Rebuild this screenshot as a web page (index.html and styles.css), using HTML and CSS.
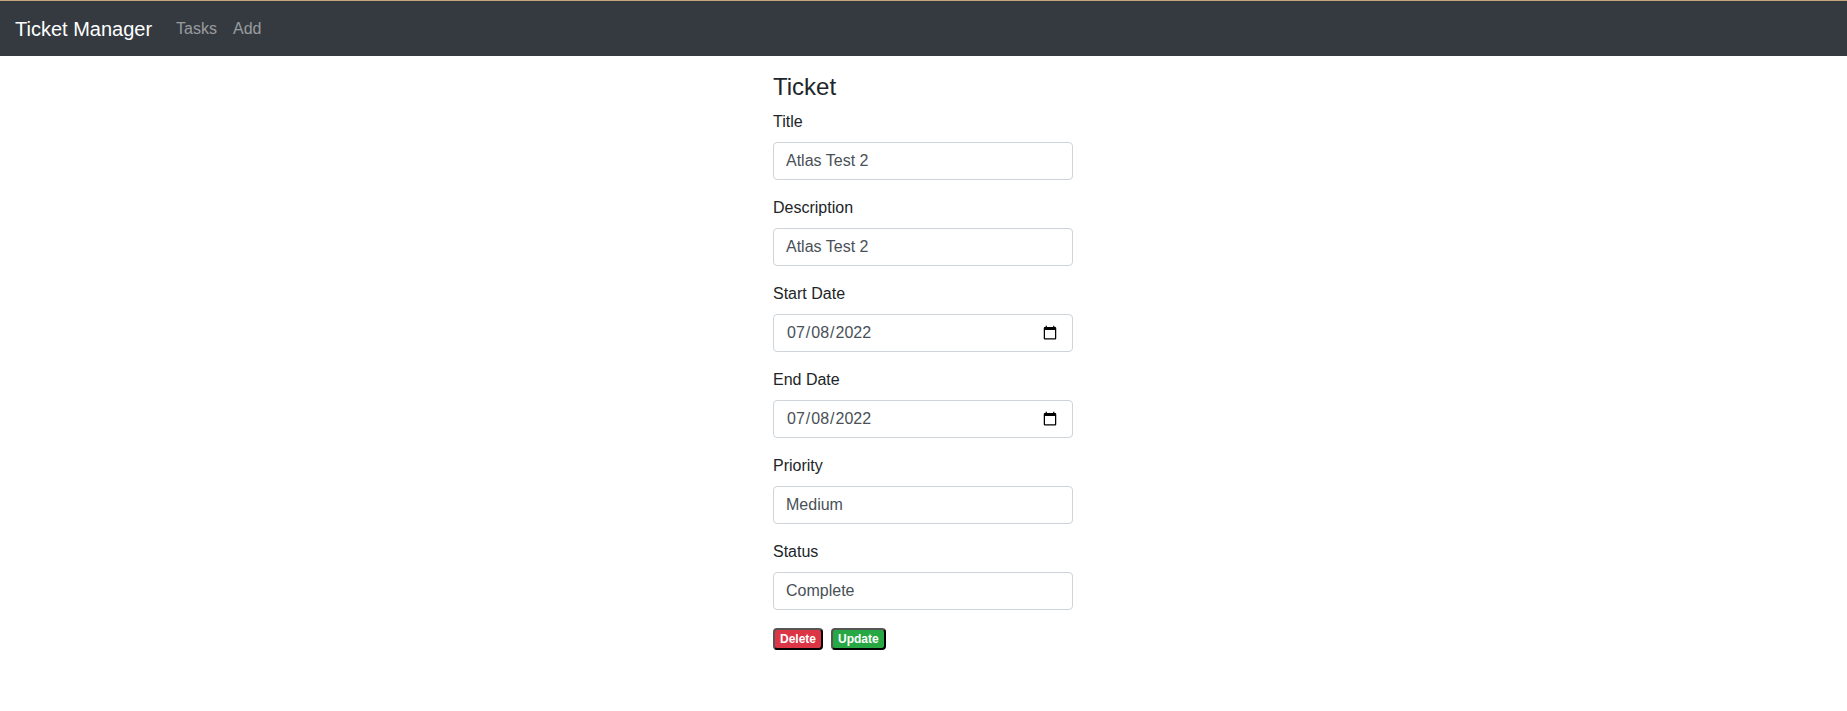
FILE: index.html
```html
<!DOCTYPE html>
<html lang="en">
<head>
<meta charset="utf-8">
<title>Ticket Manager</title>
<link rel="stylesheet" href="styles.css">
</head>
<body>
<nav class="navbar">
  <a class="brand" href="#">Ticket Manager</a>
  <div class="nav-links">
    <a class="nav-link" href="#">Tasks</a>
    <a class="nav-link" href="#">Add</a>
  </div>
</nav>
<main class="page">
  <div class="ticket">
    <h4 class="heading">Ticket</h4>
    <div class="form-group">
      <label class="label" for="title">Title</label>
      <input class="form-control" id="title" type="text" value="Atlas Test 2">
    </div>
    <div class="form-group">
      <label class="label" for="desc">Description</label>
      <input class="form-control" id="desc" type="text" value="Atlas Test 2">
    </div>
    <div class="form-group">
      <label class="label" for="start">Start Date</label>
      <input class="form-control" id="start" type="date" value="2022-07-08">
    </div>
    <div class="form-group">
      <label class="label" for="end">End Date</label>
      <input class="form-control" id="end" type="date" value="2022-07-08">
    </div>
    <div class="form-group">
      <label class="label" for="priority">Priority</label>
      <input class="form-control" id="priority" type="text" value="Medium">
    </div>
    <div class="form-group">
      <label class="label" for="status">Status</label>
      <input class="form-control" id="status" type="text" value="Complete">
    </div>
    <div class="actions">
      <button class="badge badge-danger" type="button">Delete</button>
      <button class="badge badge-success" type="button">Update</button>
    </div>
  </div>
</main>
</body>
</html>
```
FILE: styles.css
```css
* { box-sizing: border-box; }

body {
  margin: 0;
  font-family: "Liberation Sans", Arial, sans-serif;
  font-size: 16px;
  line-height: 1.5;
  color: #212529;
  background: #fff;
}

.navbar {
  display: flex;
  align-items: center;
  height: 56px;
  padding: 0 15px;
  background: #343a40;
  border-top: 1px solid #c4a57c;
}

.brand {
  font-size: 20px;
  line-height: 30px;
  color: #fff;
  text-decoration: none;
  margin-right: 16px;
}

.nav-links {
  display: flex;
}

.nav-link {
  padding: 8px;
  color: rgba(255, 255, 255, 0.5);
  text-decoration: none;
  line-height: 24px;
}

.page {
  display: flex;
  justify-content: center;
  padding-top: 17px;
  padding-right: 1px;
}

.ticket {
  width: 300px;
}

.heading {
  margin: 0 0 8px;
  font-size: 24px;
  font-weight: 500;
  line-height: 1.2;
}

.form-group {
  margin-bottom: 16px;
}

.label {
  display: block;
  margin-bottom: 8px;
  line-height: 24px;
}

.form-control {
  display: block;
  width: 100%;
  height: 38px;
  padding: 6px 12px;
  font-family: inherit;
  font-size: 16px;
  line-height: 1.5;
  color: #495057;
  background: #fff;
  border: 1px solid #ced4da;
  border-radius: 4px;
}

.actions {
  display: flex;
  gap: 8px;
  padding-top: 2px;
}

.badge {
  display: inline-block;
  padding: 3px 5px;
  font-family: inherit;
  font-size: 12px;
  font-weight: 700;
  line-height: 1;
  color: #fff;
  border: 2px outset #555;
  border-radius: 4px;
  cursor: pointer;
}

.badge-danger { background: #dc3545; }
.badge-success { background: #28a745; }
```
